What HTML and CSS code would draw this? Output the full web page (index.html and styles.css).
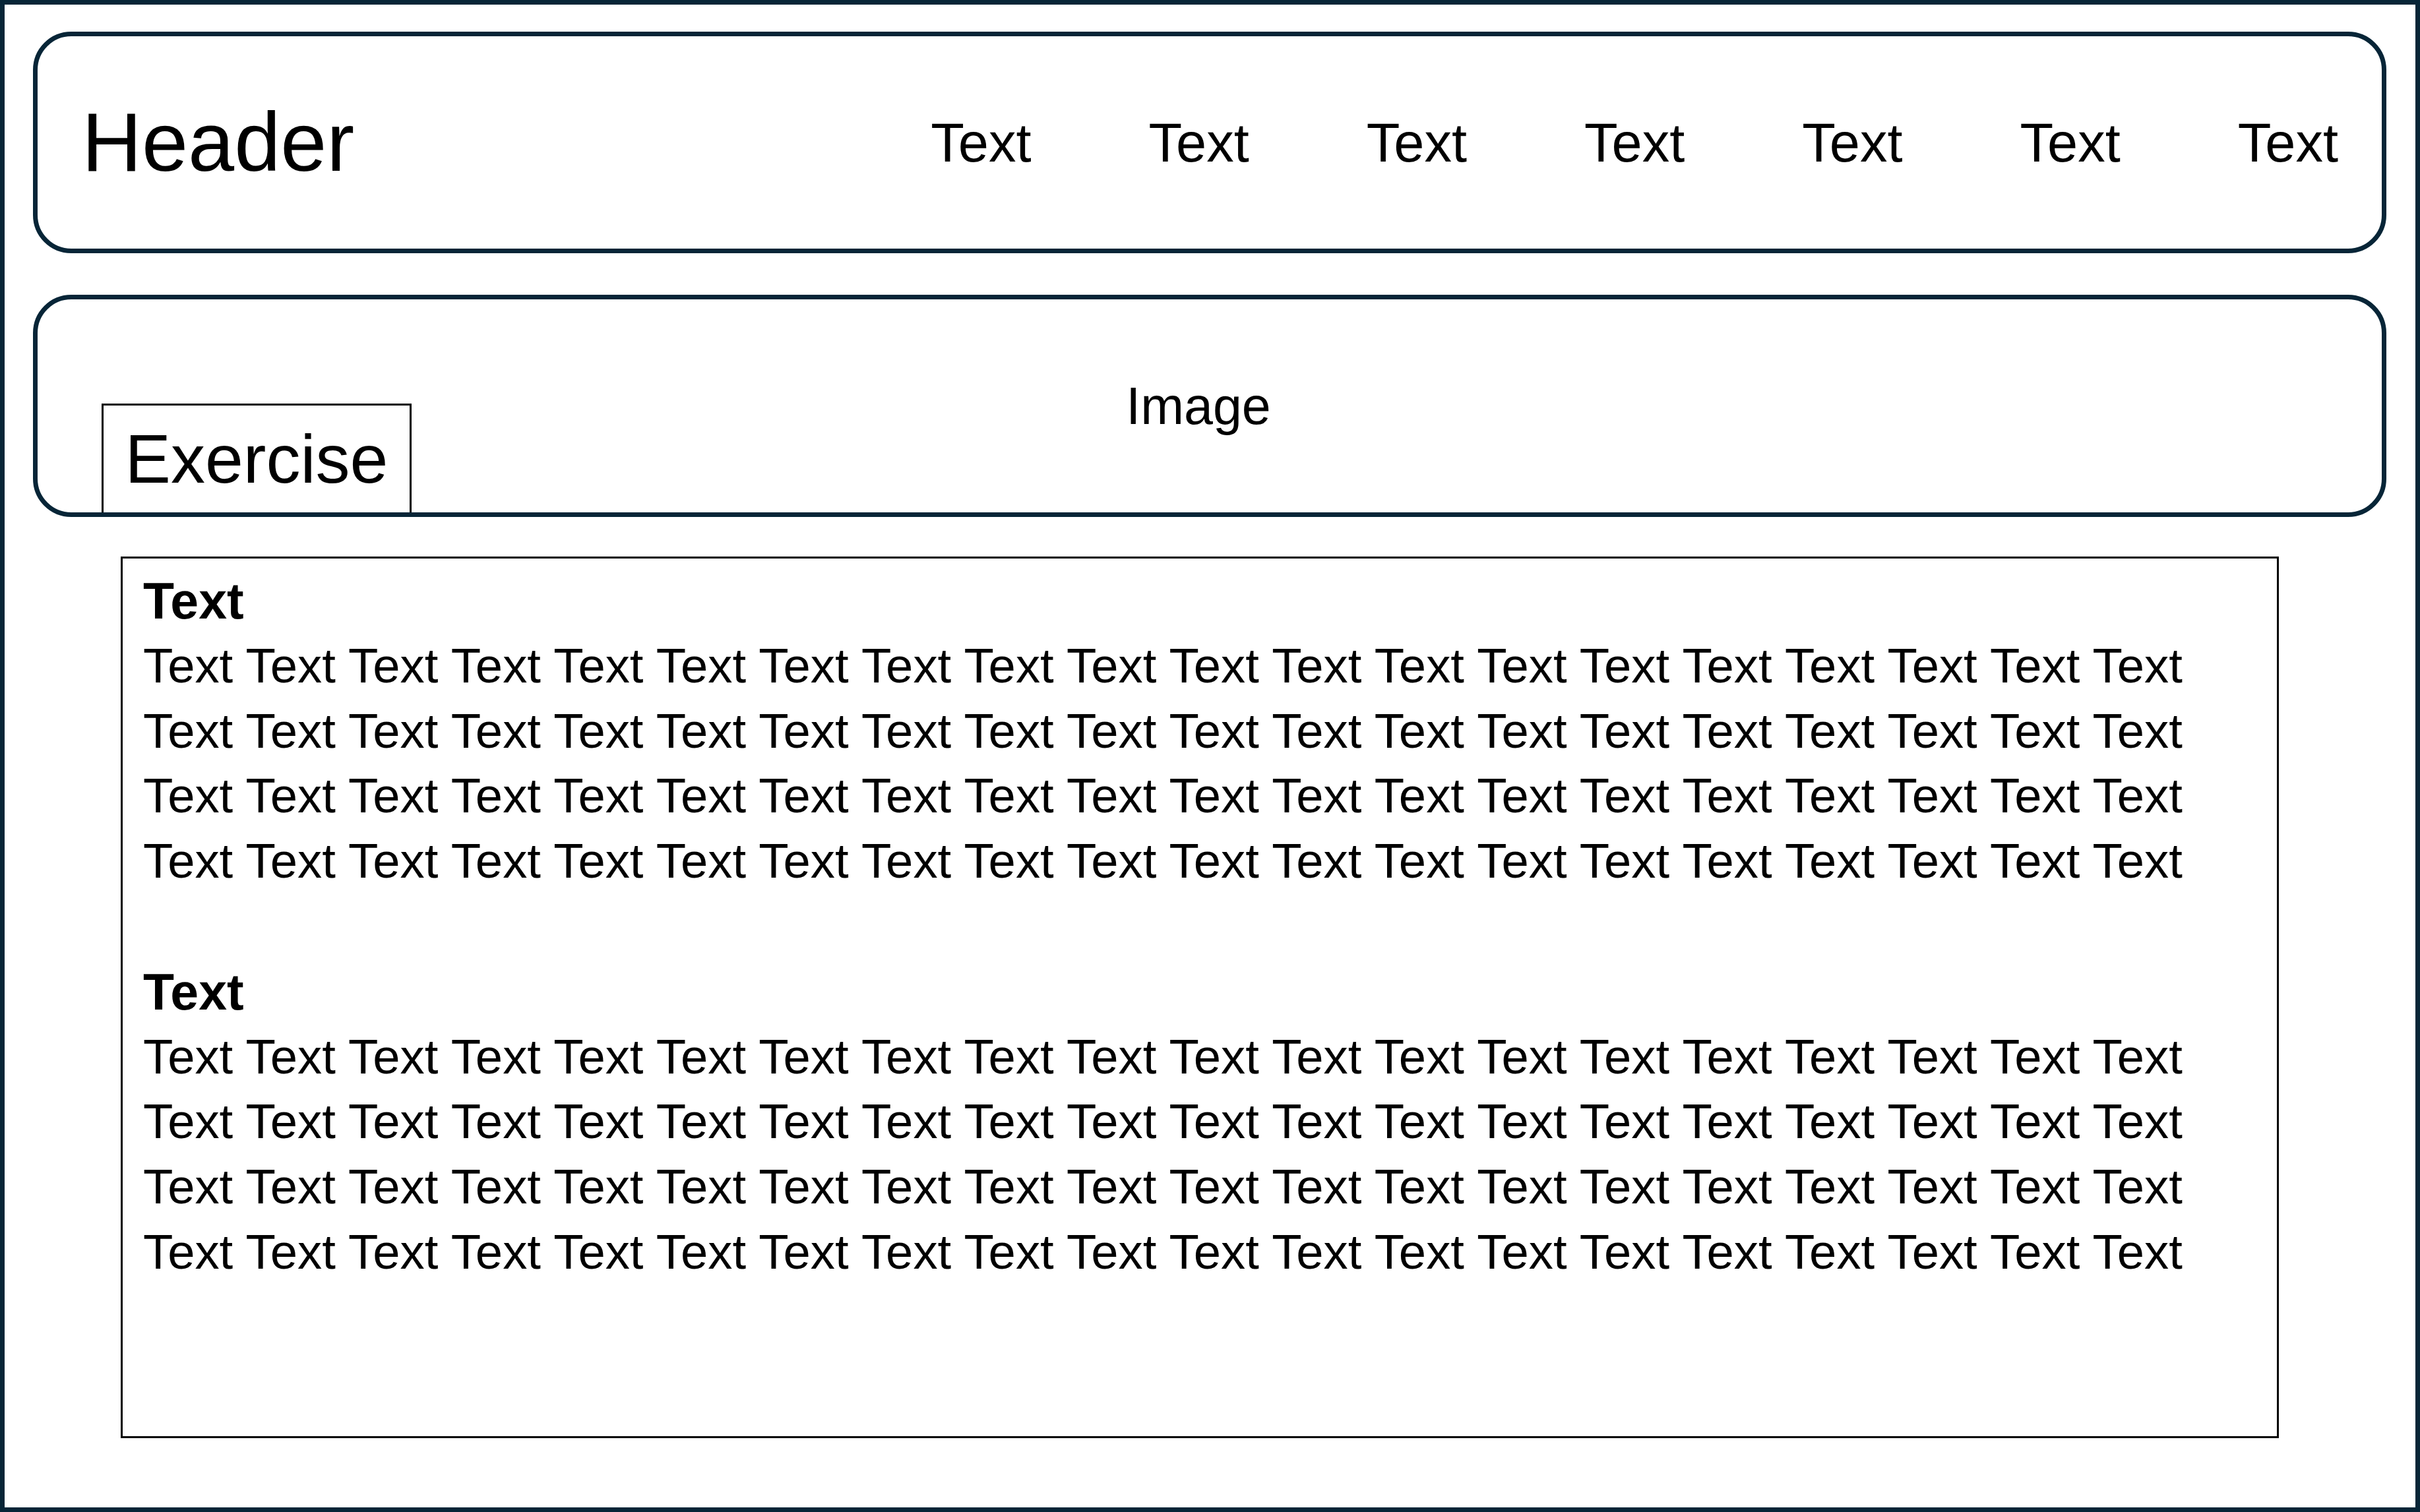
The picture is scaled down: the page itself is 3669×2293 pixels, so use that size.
FILE: index.html
```html
<!DOCTYPE html>
<html lang="en">
<head>
<meta charset="utf-8">
<title>Exercise</title>
<link rel="stylesheet" href="styles.css">
</head>
<body>
<div class="frame">
  <header class="header">
    <div class="brand">Header</div>
    <nav class="nav">
      <span class="nav-item">Text</span>
      <span class="nav-item">Text</span>
      <span class="nav-item">Text</span>
      <span class="nav-item">Text</span>
      <span class="nav-item">Text</span>
      <span class="nav-item">Text</span>
      <span class="nav-item">Text</span>
    </nav>
  </header>

  <section class="hero">
    <span class="hero-label">Image</span>
    <div class="tab">Exercise</div>
  </section>

  <article class="content">
    <h2 class="title">Text</h2>
    <p class="para">Text Text Text Text Text Text Text Text Text Text Text Text Text Text Text Text Text Text Text Text<br>Text Text Text Text Text Text Text Text Text Text Text Text Text Text Text Text Text Text Text Text<br>Text Text Text Text Text Text Text Text Text Text Text Text Text Text Text Text Text Text Text Text<br>Text Text Text Text Text Text Text Text Text Text Text Text Text Text Text Text Text Text Text Text</p>
    <div class="spacer"></div>
    <h2 class="title">Text</h2>
    <p class="para">Text Text Text Text Text Text Text Text Text Text Text Text Text Text Text Text Text Text Text Text<br>Text Text Text Text Text Text Text Text Text Text Text Text Text Text Text Text Text Text Text Text<br>Text Text Text Text Text Text Text Text Text Text Text Text Text Text Text Text Text Text Text Text<br>Text Text Text Text Text Text Text Text Text Text Text Text Text Text Text Text Text Text Text Text</p>
  </article>
</div>
</body>
</html>
```

FILE: styles.css
```css
* {
  box-sizing: border-box;
}

html, body {
  margin: 0;
  padding: 0;
  background: #ffffff;
}

body {
  font-family: "Liberation Sans", Arial, sans-serif;
  color: #000000;
}

.frame {
  width: 100vw;
  height: 100vh;
  border: 7px solid #072537;
  padding: 41px 44px 0 43px;
  display: flex;
  flex-direction: column;
  overflow: hidden;
}

.header {
  height: 336px;
  border: 7px solid #072537;
  border-radius: 58px;
  display: flex;
  align-items: center;
  justify-content: space-between;
  padding: 0 66px 0 67px;
  flex-shrink: 0;
}

.brand {
  font-size: 126px;
  line-height: 1;
}

.nav {
  display: flex;
  align-items: center;
  gap: 178px;
}

.nav-item {
  font-size: 83px;
  line-height: 1;
}

.hero {
  position: relative;
  margin-top: 63px;
  height: 337px;
  border: 7px solid #072537;
  border-radius: 58px;
  display: flex;
  align-items: center;
  justify-content: center;
  padding-right: 34px;
  flex-shrink: 0;
}

.hero-label {
  font-size: 79px;
  line-height: 1;
}

.tab {
  position: absolute;
  left: 97px;
  bottom: 0;
  width: 470px;
  height: 165px;
  border: 3px solid #000000;
  border-bottom: none;
  display: flex;
  align-items: center;
  justify-content: center;
  font-size: 104px;
  background: #ffffff;
}

.content {
  margin: 60px 163px 0 133px;
  height: 1337px;
  border: 3px solid #000000;
  padding: 15px 30px 0 31px;
  flex-shrink: 0;
}

.title {
  margin: 0;
  font-size: 77px;
  font-weight: 700;
  line-height: 98.8px;
}

.para {
  margin: 0;
  font-size: 74.3px;
  line-height: 98.8px;
  white-space: nowrap;
}

.spacer {
  height: 98.8px;
}
```
